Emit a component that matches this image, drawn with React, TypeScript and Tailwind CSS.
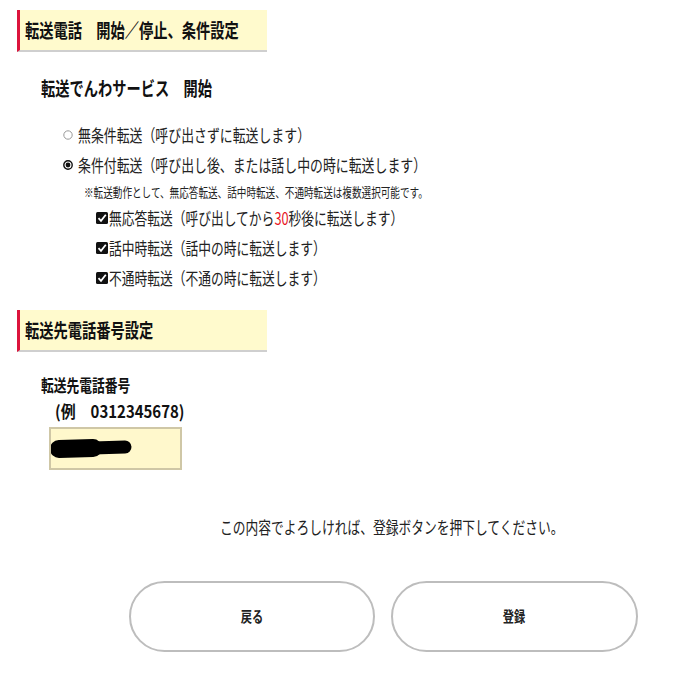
import React from 'react';

const font = "font-['Meiryo_UI','Noto_Sans_CJK_JP',sans-serif]";

const SectionHeader: React.FC<{ title: string }> = ({ title }) => (
  <div className="pl-[17px]">
    <div className="h-[42px] w-[250px] bg-[#fffacd] border-l-[3px] border-l-[#dc143c] border-b-2 border-b-[#cfcfcf] flex items-center pl-[5px]">
      <span className="inline-block origin-left scale-x-75 whitespace-nowrap text-[19px] font-bold text-[#111]">{title}</span>
    </div>
  </div>
);

const Narrow: React.FC<{ children: React.ReactNode; className?: string }> = ({ children, className }) => (
  <span className={`inline-block origin-left scale-x-75 whitespace-nowrap ${className ?? ''}`}>{children}</span>
);

const Radio: React.FC<{ checked?: boolean }> = ({ checked }) =>
  checked ? (
    <svg width="10" height="10" viewBox="0 0 10 10" className="shrink-0">
      <circle cx="5" cy="5" r="4.2" fill="white" stroke="#111" strokeWidth="1.4" />
      <circle cx="5" cy="5" r="2.4" fill="#111" />
    </svg>
  ) : (
    <svg width="10" height="10" viewBox="0 0 10 10" className="shrink-0">
      <circle cx="5" cy="5" r="4.2" fill="white" stroke="#999" strokeWidth="1" />
    </svg>
  );

const Check: React.FC = () => (
  <svg width="12" height="12" viewBox="0 0 12 12" className="shrink-0">
    <rect x="0" y="0" width="12" height="12" rx="1.5" fill="#111" />
    <path d="M2.5 6.2 L5 8.8 L9.8 2.8" fill="none" stroke="white" strokeWidth="1.8" />
  </svg>
);

export default function App() {
  return (
    <div className={`w-[676px] h-[676px] bg-white text-[#222] ${font}`}>
      <div className="h-[10px]" />
      <SectionHeader title="転送電話　開始／停止、条件設定" />

      <div className="mt-[24px] h-[24px] pl-[41px] flex items-center">
        <Narrow className="text-[19px] font-bold text-[#111]">転送でんわサービス　開始</Narrow>
      </div>

      <div className="mt-[20px] pl-[63px]">
        <div className="h-[30px] flex items-center gap-[5px]">
          <Radio />
          <Narrow className="text-[17.2px]">無条件転送（呼び出さずに転送します）</Narrow>
        </div>
        <div className="h-[30px] flex items-center gap-[5px]">
          <Radio checked />
          <Narrow className="text-[17.2px]">条件付転送（呼び出し後、または話し中の時に転送します）</Narrow>
        </div>
        <div className="h-[23px] flex items-center pl-[21px]">
          <Narrow className="text-[12.8px]">※転送動作として、無応答転送、話中時転送、不通時転送は複数選択可能です。</Narrow>
        </div>
        <div className="pl-[33px]">
          <div className="h-[30px] flex items-center gap-[1px]">
            <Check />
            <Narrow className="text-[17px]">
              無応答転送（呼び出してから<span className="text-[#e8141e]">30</span>秒後に転送します）
            </Narrow>
          </div>
          <div className="h-[30px] flex items-center gap-[1px]">
            <Check />
            <Narrow className="text-[17px]">話中時転送（話中の時に転送します）</Narrow>
          </div>
          <div className="h-[30px] flex items-center gap-[1px]">
            <Check />
            <Narrow className="text-[17px]">不通時転送（不通の時に転送します）</Narrow>
          </div>
        </div>
      </div>

      <div className="mt-[17px]">
        <SectionHeader title="転送先電話番号設定" />
      </div>

      <div className="mt-[21px] pl-[41px] h-[24px] flex items-center">
        <Narrow className="text-[17px] font-bold text-[#111]">転送先電話番号</Narrow>
      </div>
      <div className="pl-[55px] h-[28px] flex items-center">
        <span className="inline-block origin-left scale-x-[0.88] whitespace-nowrap text-[17px] font-bold text-[#111]">(例　0312345678)</span>
      </div>
      <div className="mt-[2px] pl-[49px]">
        <div className="w-[133px] h-[43px] bg-[#fff8cc] border-2 border-[#cfc7a6]">
          <svg width="90" height="40" viewBox="0 0 90 40">
            <path d="M8 20 L42 19" stroke="#000" strokeWidth="18" strokeLinecap="round" fill="none" />
            <path d="M42 19 L74 18" stroke="#000" strokeWidth="13" strokeLinecap="round" fill="none" />
          </svg>
        </div>
      </div>

      <div className="mt-[45px] h-[24px] pl-[220px] flex items-center">
        <Narrow className="text-[17px]">この内容でよろしければ、登録ボタンを押下してください。</Narrow>
      </div>

      <div className="mt-[42px] pl-[129px] flex gap-[16px]">
        <button className="w-[246px] h-[71px] rounded-full border-2 border-[#bdbdbd] bg-white flex items-center justify-center">
          <span className="inline-block scale-x-75 text-[15px] font-bold text-[#222]">戻る</span>
        </button>
        <button className="w-[247px] h-[71px] rounded-full border-2 border-[#bdbdbd] bg-white flex items-center justify-center">
          <span className="inline-block scale-x-75 text-[15px] font-bold text-[#222]">登録</span>
        </button>
      </div>
    </div>
  );
}
